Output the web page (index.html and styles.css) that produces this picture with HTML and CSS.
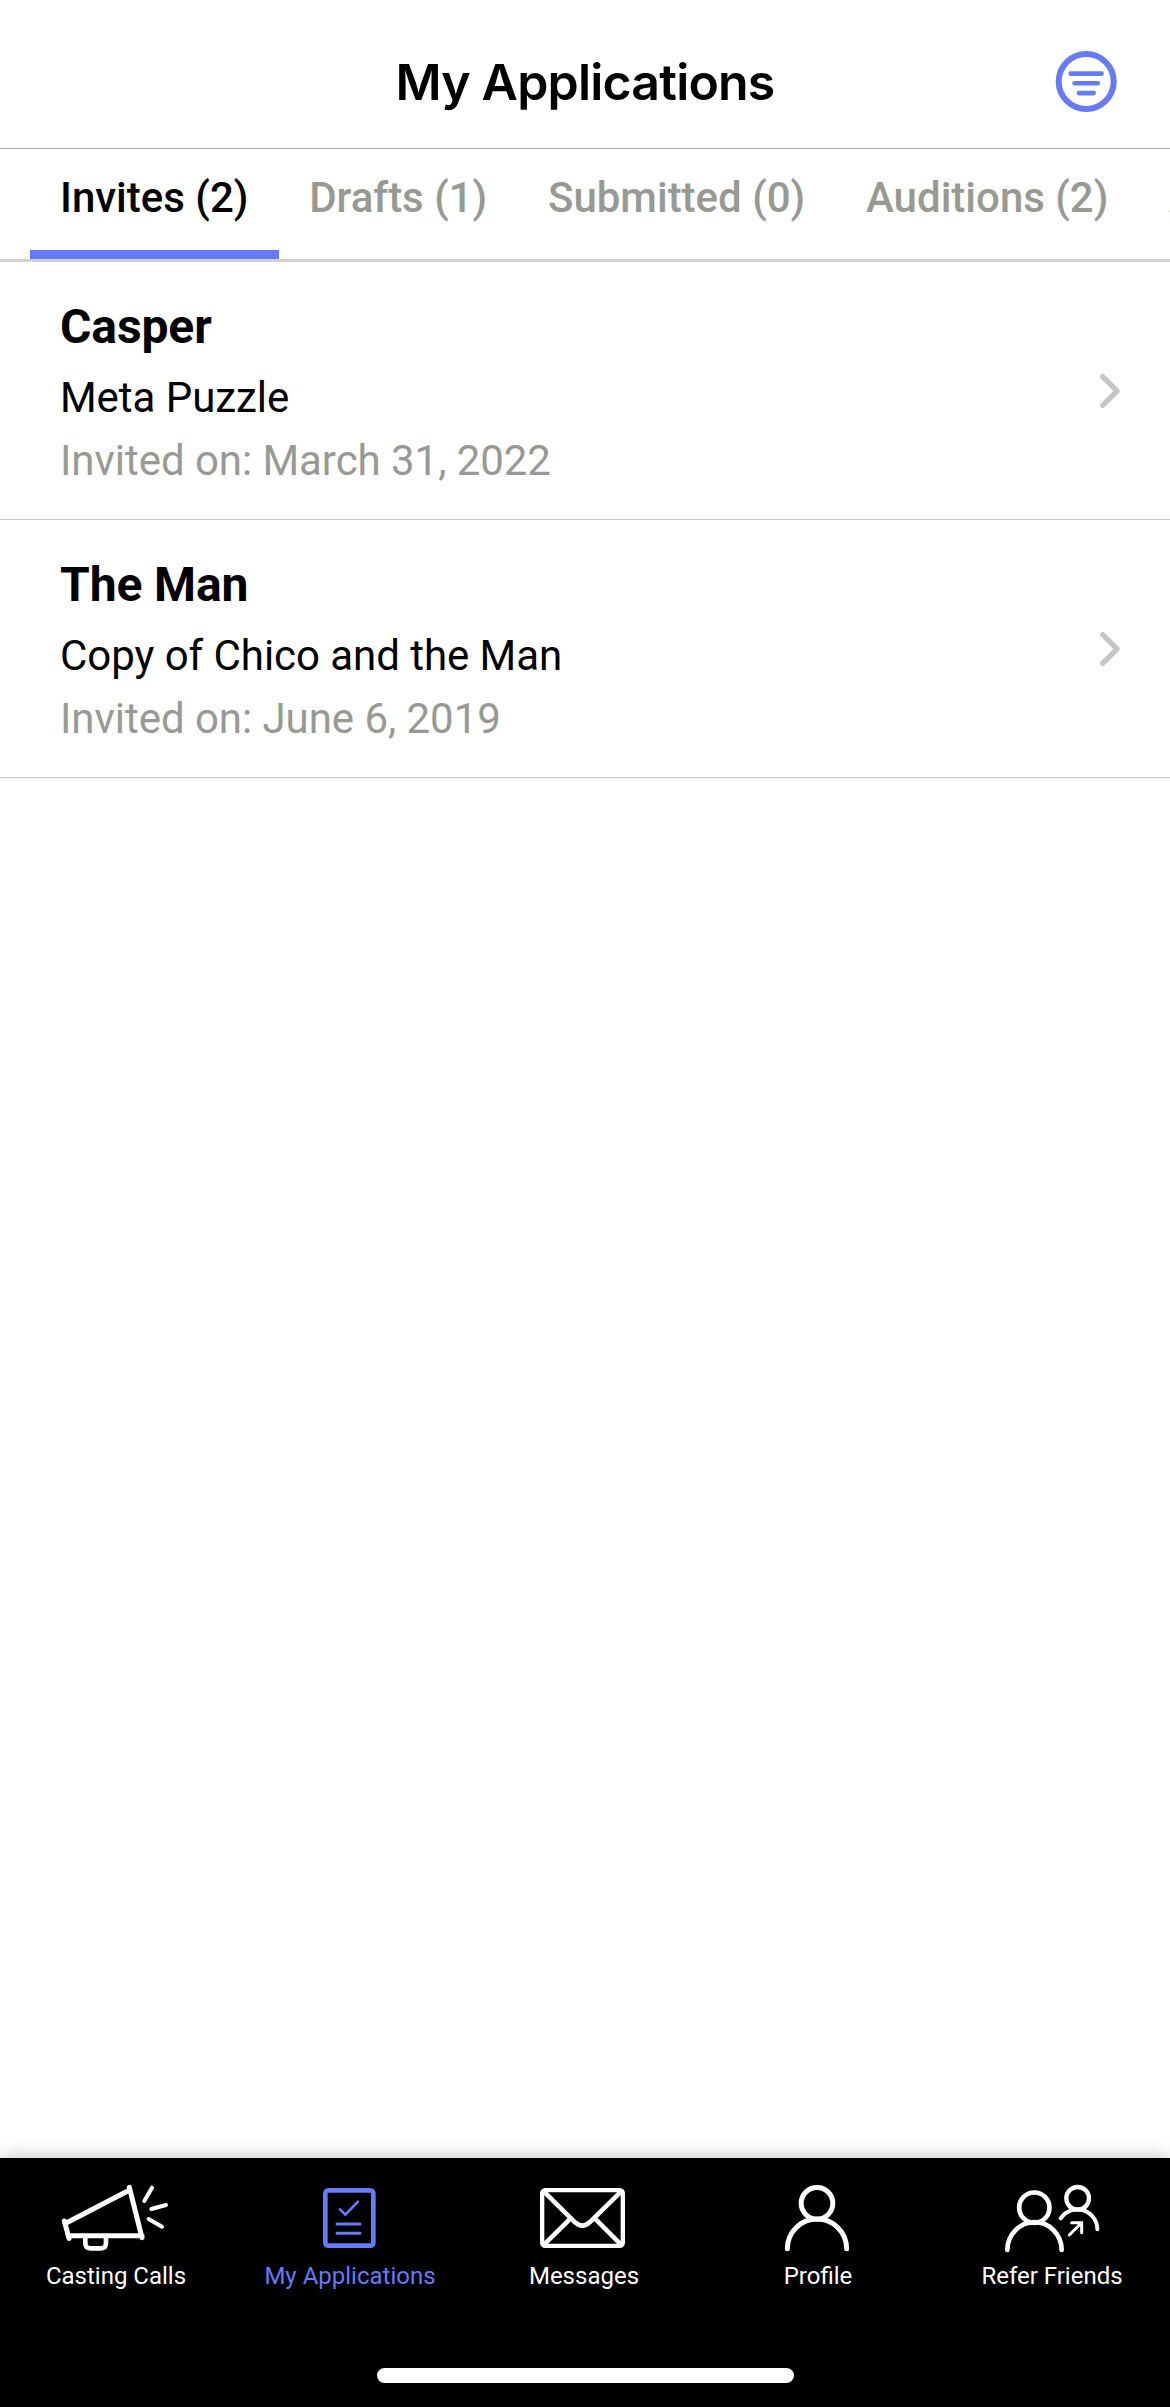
FILE: index.html
```html
<!DOCTYPE html>
<html lang="en">
<head>
<meta charset="utf-8">
<title>My Applications</title>
<link rel="stylesheet" href="styles.css">
</head>
<body>
<div class="app">
  <header class="header">
    <h1 class="title">My Applications</h1>
    <button class="filter" aria-label="Filter">
      <svg width="62" height="62" viewBox="0 0 62 62" fill="none" stroke="currentColor" stroke-linecap="round">
        <circle cx="31.2" cy="31.5" r="27.5" stroke-width="6"/>
        <path d="M15.7 23.6H46.6M19.6 33.3H42.8M23.9 43.1H38.7" stroke-width="4.6"/>
      </svg>
    </button>
  </header>
  <nav class="tabs">
    <a class="tab active">Invites (2)</a>
    <a class="tab">Drafts (1)</a>
    <a class="tab">Submitted (0)</a>
    <a class="tab">Auditions (2)</a>
    <a class="tab">A</a>
  </nav>
  <main class="list">
    <article class="row">
      <div class="info">
        <h2 class="role">Casper</h2>
        <p class="project">Meta Puzzle</p>
        <p class="date">Invited on: March 31, 2022</p>
      </div>
      <svg class="chevron" width="20" height="34" viewBox="0 0 20 34"><path d="M2.7 2.7L17 17L2.7 31.3"/></svg>
    </article>
    <article class="row">
      <div class="info">
        <h2 class="role">The Man</h2>
        <p class="project">Copy of Chico and the Man</p>
        <p class="date">Invited on: June 6, 2019</p>
      </div>
      <svg class="chevron" width="20" height="34" viewBox="0 0 20 34"><path d="M2.7 2.7L17 17L2.7 31.3"/></svg>
    </article>
  </main>
  <footer class="bottom">
    <nav class="bar">
      <a class="item">
        <svg class="icon" viewBox="111 24 360 300">
          <path stroke-width="15" d="M133 213L147 265M140 218L329 120M328 112L366 263M147 257H366"/>
          <path stroke-width="14" d="M196 260V280Q196 295 211 295H243Q258 295 258 280V260"/>
          <path stroke-width="12" d="M396 113L373 153M438 165L394 177M386 207L426 230"/>
        </svg>
        <span class="label">Casting Calls</span>
      </a>
      <a class="item current">
        <svg class="icon" viewBox="123 24 360 300">
          <rect x="226" y="121" width="144" height="166" rx="9" stroke-width="14"/>
          <path stroke-width="8" stroke-linejoin="miter" d="M270 178L286 194L324 155"/>
          <path stroke-width="9" d="M261 222H330M261 250H330"/>
        </svg>
        <span class="label">My Applications</span>
      </a>
      <a class="item">
        <svg class="icon" viewBox="75 24 360 300">
          <rect x="126.500" y="120.500" width="242" height="167" rx="9" stroke-width="13"/>
          <path stroke-width="14" d="M135 128L225 217Q247 237 269 217L360 128M211 206L135 281M285 206L360 281"/>
        </svg>
        <span class="label">Messages</span>
      </a>
      <a class="item">
        <svg class="icon" viewBox="777 24 360 300">
          <circle cx="951" cy="160" r="47.500" stroke-width="15"/>
          <path stroke-width="15" d="M862 296A89 89 0 0 1 1040 296"/>
        </svg>
        <span class="label">Profile</span>
      </a>
      <a class="item">
        <svg class="icon" viewBox="69 24 360 300">
          <circle cx="193" cy="173" r="45.500" stroke-width="14"/>
          <path stroke-width="14" d="M112 300A81 83 0 0 1 275 300"/>
          <circle cx="323" cy="145" r="34" stroke-width="13"/>
          <path stroke-width="12" d="M272 205A60 60 0 0 1 382 238"/>
          <path stroke-width="9" stroke-linejoin="miter" d="M298 255L334 219M305 218H335V248"/>
        </svg>
        <span class="label">Refer Friends</span>
      </a>
    </nav>
    <div class="home"></div>
  </footer>
</div>
</body>
</html>
```
FILE: styles.css
```css
* { box-sizing: border-box; margin: 0; padding: 0; }
body { background: #fff; color: #000; font-family: Roboto, "Liberation Sans", sans-serif; }
.app { width: 1170px; height: 2407px; display: flex; flex-direction: column; overflow: hidden; }

.header {
  height: 149px;
  border-bottom: 1px solid #adadad;
  display: grid;
  grid-template-columns: 1fr auto 1fr;
  padding: 0 53px;
}
.title {
  grid-column: 2;
  font: 600 50px/60px Inter, sans-serif;
  letter-spacing: -.8px;
  padding-top: 52px;
  white-space: nowrap;
}
.filter {
  justify-self: end;
  align-self: start;
  margin-top: 50px;
  width: 62px;
  height: 62px;
  border: 0;
  background: none;
  color: #667bf7;
}
.filter svg { display: block; }

.tabs {
  height: 113px;
  padding-left: 30px;
  display: flex;
  border-bottom: 3px solid #d1d1cf;
  overflow: hidden;
}
.tab {
  flex: none;
  padding: 24px 30.7px 0 30px;
  font-size: 42px;
  line-height: 50px;
  font-weight: 500;
  color: #999994;
  border-bottom: 9px solid transparent;
}
.tab.active { color: #000; border-color: #667bf7; }

.list { flex: 1; }
.row {
  height: 258px;
  padding: 0 50px 0 60px;
  display: flex;
  justify-content: space-between;
  align-items: center;
  border-bottom: 1px solid #c8c8c8;
}
.info { align-self: flex-start; padding-top: 35px; }
.role { font-size: 48px; line-height: 60px; font-weight: 700; letter-spacing: -.1px; }
.project, .date { font-size: 42px; line-height: 63px; letter-spacing: -.05px; }
.project { padding-top: 9px; }
.date { color: #999994; }
.chevron { fill: none; stroke: #c5c5c6; stroke-width: 5.4; stroke-linecap: round; stroke-linejoin: round; }

.bottom {
  height: 249px;
  background: #000;
  color: #fff;
  box-shadow: 0 0 18px rgba(0, 0, 0, .26);
  display: flex;
  flex-direction: column;
  align-items: center;
}
.bar { display: flex; width: 100%; height: 210px; }
.item { width: 234px; display: flex; flex-direction: column; align-items: center; }
.item.current { color: #667bf7; }
.icon {
  width: 120px;
  height: 100px;
  fill: none;
  stroke: currentColor;
  stroke-linecap: round;
  stroke-linejoin: round;
}
.label { font-size: 24px; line-height: 30px; margin: 3px 2px 0 0; white-space: nowrap; }
.home { width: 417px; height: 15px; border-radius: 8px; background: #fff; }
```
